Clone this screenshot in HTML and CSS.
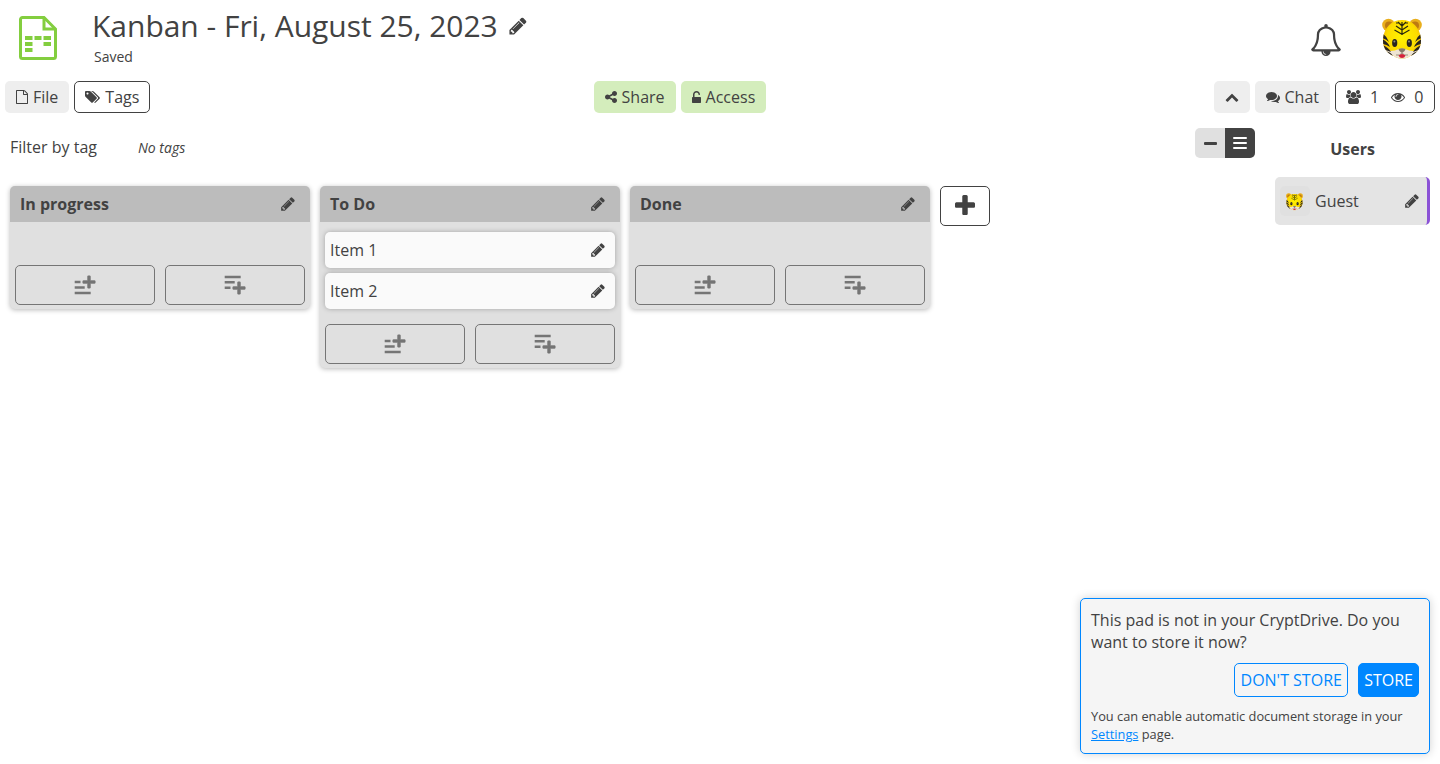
FILE: index.html
```html
<!DOCTYPE html>
<html lang="en">
<head>
<meta charset="utf-8">
<title>Kanban - Fri, August 25, 2023</title>
<link rel="stylesheet" href="styles.css">
</head>
<body>
<svg class="sprite" aria-hidden="true">
  <symbol id="pencil" viewBox="0 0 1792 1792"><path d="M491 1536l91-91-235-235-91 91v107h128v128h107zm523-928q0-22-22-22-10 0-17 7l-542 542q-7 7-7 17 0 22 22 22 10 0 17-7l542-542q7-7 7-17zm-54-192l416 416-832 832h-416v-416zm683 96q0 53-37 90l-166 166-416-416 166-165q36-38 90-38 53 0 91 38l235 234q37 39 37 91z"/></symbol>
  <symbol id="bell" viewBox="0 0 1792 1792"><path d="M912 1696q0-16-16-16-59 0-101.500-42.500t-42.500-101.500q0-16-16-16t-16 16q0 73 51.500 124.500t124.500 51.500q16 0 16-16zm-666-288h1300q-266-300-266-832 0-51-24-105t-69-103-121.500-80.500-169.500-31.500-169.500 31.500-121.500 80.500-69 103-24 105q0 532-266 832zm1482 0q0 52-38 90t-90 38h-448q0 106-75 181t-181 75-181-75-75-181h-448q-52 0-90-38t-38-90q50-42 91-88t85-119.500 74.500-158.500 50-206 19.500-260q0-152 117-282.500t307-158.500q-8-19-8-39 0-40 28-68t68-28 68 28 28 68q0 20-8 39 190 28 307 158.500t117 282.500q0 139 19.500 260t50 206 74.500 158.500 85 119.500 91 88z"/></symbol>
  <symbol id="file" viewBox="128 0 1536 1792"><path d="M1596 380q28 28 48 76t20 88v1152q0 40-28 68t-68 28h-1344q-40 0-68-28t-28-68v-1600q0-40 28-68t68-28h896q40 0 88 20t76 48zm-444-244v376h376q-10-29-22-41l-313-313q-12-12-41-22zm384 1528v-1024h-416q-40 0-68-28t-28-68v-416h-768v1536h1280z"/></symbol>
  <symbol id="tags" viewBox="0 0 1920 1792"><path d="M448 448q0-53-37.500-90.500t-90.500-37.500-90.500 37.500-37.500 90.500 37.500 90.500 90.500 37.500 90.500-37.500 37.500-90.500zm1067 576q0 53-37 90l-491 492q-39 37-91 37-53 0-90-37l-715-716q-38-37-64.500-101t-26.500-117v-416q0-52 38-90t90-38h416q53 0 117 26.500t102 64.500l715 714q37 39 37 91zm384 0q0 53-37 90l-491 492q-39 37-91 37-36 0-59-14t-53-45l470-470q37-37 37-90 0-52-37-91l-715-714q-38-38-102-64.500t-117-26.500h224q53 0 117 26.500t102 64.500l715 714q37 39 37 91z"/></symbol>
  <symbol id="share" viewBox="128 0 1536 1792"><path d="M1344 1024q133 0 226.500 93.500t93.500 226.500-93.500 226.500-226.500 93.500-226.500-93.500-93.500-226.500q0-12 2-34l-360-180q-92 86-218 86-133 0-226.500-93.500t-93.500-226.500 93.500-226.500 226.500-93.500q126 0 218 86l360-180q-2-22-2-34 0-133 93.500-226.500t226.500-93.500 226.500 93.500 93.500 226.500-93.500 226.500-226.500 93.500q-126 0-218-86l-360 180q2 22 2 34t-2 34l360 180q92-86 218-86z"/></symbol>
  <symbol id="unlock" viewBox="320 0 1152 1792"><path d="M1376 896q40 0 68 28t28 68v576q0 40-28 68t-68 28h-960q-40 0-68-28t-28-68v-576q0-40 28-68t68-28h32v-320q0-185 131.500-316.500t316.500-131.500 316.500 131.500 131.500 316.500q0 26-19 45t-45 19h-64q-26 0-45-19t-19-45q0-106-75-181t-181-75-181 75-75 181v320h736z"/></symbol>
  <symbol id="up" viewBox="0 0 1792 1792"><path d="M1683 1331l-166 165q-19 19-45 19t-45-19l-531-531-531 531q-19 19-45 19t-45-19l-166-165q-19-19-19-45.500t19-45.500l742-741q19-19 45-19t45 19l742 741q19 19 19 45.500t-19 45.500z"/></symbol>
  <symbol id="comments" viewBox="0 0 1792 1792"><path d="M1408 768q0 139-94 257t-256.500 186.500-353.500 68.500q-86 0-176-16-124 88-278 128-36 9-86 16h-3q-11 0-20.500-8t-11.500-21q-1-3-1-6.500t.5-6.500 2-6l2.500-5 3.500-5.500 4-5 4.500-5 4-4.500q5-6 23-25t26-29.500 22.500-29 25-38.500 20.500-44q-124-72-195-177t-71-224q0-139 94-257t256.500-186.500 353.500-68.500 353.500 68.500 256.500 186.500 94 257zm384 256q0 120-71 224.500t-195 176.500q10 24 20.500 44t25 38.500 22.500 29 26 29.500 23 25q1 1 4 4.500t4.500 5 4 5 3.500 5.500l2.500 5 2 6 .5 6.500-1 6.500q-3 14-13 22t-22 7q-50-7-86-16-154-40-278-128-90 16-176 16-271 0-472-132 58 4 88 4 161 0 309-45t264-129q125-92 192-212t67-254q0-77-23-152 129 71 204 178t75 230z"/></symbol>
  <symbol id="users" viewBox="64 0 1920 1792"><path d="M657 896q-162 5-265 128h-134q-82 0-138-40.500t-56-118.500q0-353 124-353 6 0 43.500 21t97.500 42.500 119 21.500q67 0 133-23-5 37-5 66 0 139 81 256zm1071 637q0 120-73 189.500t-194 69.500h-874q-121 0-194-69.500t-73-189.500q0-53 3.500-103.500t14-109 26.500-108.500 43-97.500 62-81 85.500-53.500 111.500-20q10 0 43 21.500t73 48 107 48 135 21.500 135-21.500 107-48 73-48 43-21.500q61 0 111.500 20t85.500 53.500 62 81 43 97.500 26.500 108.500 14 109 3.500 103.500zm-1024-1277q0 106-75 181t-181 75-181-75-75-181 75-181 181-75 181 75 75 181zm704 384q0 159-112.500 271.500t-271.500 112.500-271.500-112.500-112.500-271.500 112.500-271.500 271.500-112.500 271.500 112.500 112.500 271.500zm576 225q0 78-56 118.500t-138 40.500h-134q-103-123-265-128 81-117 81-256 0-29-5-66 66 23 133 23 59 0 119-21.500t97.500-42.500 43.500-21q124 0 124 353zm-128-609q0 106-75 181t-181 75-181-75-75-181 75-181 181-75 181 75 75 181z"/></symbol>
  <symbol id="eye" viewBox="0 0 1792 1792"><path d="M1664 960q-152-236-381-353 61 104 61 225 0 185-131.500 316.500t-316.500 131.500-316.500-131.500-131.500-316.500q0-121 61-225-229 117-381 353 133 205 333.500 326.500t434.500 121.500 434.500-121.500 333.500-326.500zm-720-384q0-20-14-34t-34-14q-125 0-214.500 89.500t-89.500 214.500q0 20 14 34t34 14 34-14 14-34q0-86 61-147t147-61q20 0 34-14t14-34zm848 384q0 34-20 69-140 230-376.500 368.500t-499.500 138.500-499.500-139-376.500-368q-20-35-20-69t20-69q140-229 376.500-368t499.500-139 499.500 139 376.500 368q20 35 20 69z"/></symbol>
  <symbol id="plus" viewBox="192 0 1408 1792"><path d="M1600 736v192q0 40-28 68t-68 28h-416v416q0 40-28 68t-68 28h-192q-40 0-68-28t-28-68v-416h-416q-40 0-68-28t-28-68v-192q0-40 28-68t68-28h416v-416q0-40 28-68t68-28h192q40 0 68 28t28 68v416h416q40 0 68 28t28 68z"/></symbol>
  <symbol id="add-top" viewBox="0 0 22 20"><path d="M.7 5.800h5.800v2.500H.7zM.7 11.300h10v2.500H.7zM.7 16.700h16v2.500H.7z"/><path stroke="currentColor" stroke-width=".4" d="M13.500 1.500q0-.8.8-.8h1.400q.8 0 .8.800v4h4q.8 0 .8.800v1.400q0 .8-.8.800h-4v4q0 .8-.8.800h-1.400q-.8 0-.8-.8v-4h-4q-.8 0-.8-.8V6.300q0-.8.8-.8h4z"/></symbol>
  <symbol id="add-bottom" viewBox="0 0 22 20"><path d="M.7.8h16v2.500h-16zM.7 6.100h10v2.500H.7zM.7 11.500h5.800V14H.7z"/><path stroke="currentColor" stroke-width=".4" d="M13.500 7.500q0-.8.8-.8h1.400q.8 0 .8.800v4h4q.8 0 .8.800v1.400q0 .8-.8.800h-4v4q0 .8-.8.800h-1.400q-.8 0-.8-.8v-4h-4q-.8 0-.8-.8v-1.400q0-.8.8-.8h4z"/></symbol>
  <radialGradient id="fur" cx="50%" cy="45%" r="58%"><stop offset="0" stop-color="#fff200"/><stop offset=".65" stop-color="#fddc00"/><stop offset="1" stop-color="#eda60c"/></radialGradient>
  <clipPath id="face"><path d="M20 2C30 2 38 9 39 21c.5 10-5 15-11 17-4 3.500-12 3.500-16 0C6 36 .5 31 1 21 2 9 10 2 20 2z"/></clipPath>
  <symbol id="tiger" viewBox="0 0 40 42">
    <circle cx="6.500" cy="7" r="6.300" fill="#e9ae1c"/><circle cx="33.500" cy="7" r="6.300" fill="#e9ae1c"/>
    <circle cx="7" cy="7.500" r="4" fill="#bd7a12"/><circle cx="33" cy="7.500" r="4" fill="#bd7a12"/>
    <g clip-path="url(#face)">
      <path fill="url(#fur)" d="M0 0h40v42H0z"/>
      <path fill="#eee4d3" d="M0 29q5 1 8 4 5 0 9-2 3-1 6 0 4 2 9 2 3-3 8-4v13H0z"/>
      <path fill="#26231f" d="M0 15q5 3 7 9-3-3-7-4zM0 21q6 3 8 8-4-3-8-3zM0 27q6 2 9 7-5-2-9-2zM3 33q6 1 8 5-4-1-7-1zM40 15q-5 3-7 9 3-3 7-4zM40 21q-6 3-8 8 4-3 8-3zM40 27q-6 2-9 7 5-2 9-2zM37 33q-6 1-8 5 4-1 7-1z"/>
    </g>
    <path d="M20 4v13M20 8l-4-4M20 8l4-4M20 12l-6-4M20 12l6-4M19.500 16l-7-4M20.500 16l7-4M17 5l-3 0M23 5l3 0" fill="none" stroke="#28270e" stroke-width="1.200"/>
    <ellipse cx="12.700" cy="25" rx="2.600" ry="3.900" fill="#28251f"/><ellipse cx="27.300" cy="25" rx="2.600" ry="3.900" fill="#28251f"/>
    <circle cx="12.400" cy="23.600" r="1" fill="#8a8a80"/><circle cx="27" cy="23.600" r="1" fill="#8a8a80"/>
    <path fill="#857969" d="M16.500 31q3.500-1.500 7 0 0 2-3.500 4-3.500-2-3.500-4z"/><path fill="none" stroke="#857969" stroke-width=".8" d="M14 37q4 1 6-2 2 3 6 2"/><path fill="#d5203a" d="M16.500 37.500q3.500-3 7 0-1 2.500-3.500 2.500t-3.500-2.500z"/>
  </symbol>
</svg>

<header class="header">
  <svg class="logo" viewBox="0 0 38 44"><g fill="none" stroke="#83ce3f" stroke-width="3"><path d="M3.500 1.500H25L36.500 13v27.500a2 2 0 0 1-2 2h-31a2 2 0 0 1-2-2v-37a2 2 0 0 1 2-2z"/><path d="M25 1.500V13h11.500"/></g><path fill="#83ce3f" d="M6 20h7.500v4H6zM15.500 20h7v4h-7zM24.500 20H32v4h-7.500zM6 26h7.500v4H6zM24.500 26H32v4h-7.500zM6 32h7.500v4H6z"/></svg>
  <div class="heading">
    <div class="title-line"><h1 class="title">Kanban - Fri, August 25, 2023</h1><svg class="title-pencil"><use href="#pencil"/></svg></div>
    <div class="saved">Saved</div>
  </div>
  <svg class="bell"><use href="#bell"/></svg>
  <svg class="avatar"><use href="#tiger"/></svg>
</header>

<nav class="toolbar">
  <div class="group">
    <button class="btn"><svg class="i12"><use href="#file"/></svg>File</button>
    <button class="btn outlined"><svg class="i15"><use href="#tags"/></svg>Tags</button>
  </div>
  <div class="group center">
    <button class="btn green"><svg class="i12"><use href="#share"/></svg>Share</button>
    <button class="btn green"><svg class="i9"><use href="#unlock"/></svg>Access</button>
  </div>
  <div class="group">
    <button class="btn up"><svg class="i14"><use href="#up"/></svg></button>
    <button class="btn"><svg class="i14"><use href="#comments"/></svg>Chat</button>
    <button class="btn outlined people"><svg class="i15"><use href="#users"/></svg><span class="count">1</span><svg class="i14"><use href="#eye"/></svg><span>0</span></button>
  </div>
</nav>

<div class="content">
  <main class="kanban">
    <div class="filter">
      <span class="filter-label">Filter by tag</span><em class="no-tags">No tags</em>
      <div class="view"><span class="view-item"><i class="bar"></i></span><span class="view-item active"><i class="bar"></i><i class="bar"></i><i class="bar"></i></span></div>
    </div>
    <div class="boards">
      <section class="board">
        <h2 class="board-head">In progress<svg class="i16"><use href="#pencil"/></svg></h2>
        <div class="items"></div>
        <div class="adds"><button class="add"><svg><use href="#add-top"/></svg></button><button class="add"><svg><use href="#add-bottom"/></svg></button></div>
      </section>
      <section class="board">
        <h2 class="board-head">To Do<svg class="i16"><use href="#pencil"/></svg></h2>
        <div class="items">
          <div class="item">Item 1<svg class="i16"><use href="#pencil"/></svg></div>
          <div class="item">Item 2<svg class="i16"><use href="#pencil"/></svg></div>
        </div>
        <div class="adds"><button class="add"><svg><use href="#add-top"/></svg></button><button class="add"><svg><use href="#add-bottom"/></svg></button></div>
      </section>
      <section class="board">
        <h2 class="board-head">Done<svg class="i16"><use href="#pencil"/></svg></h2>
        <div class="items"></div>
        <div class="adds"><button class="add"><svg><use href="#add-top"/></svg></button><button class="add"><svg><use href="#add-bottom"/></svg></button></div>
      </section>
      <button class="new-board"><svg><use href="#plus"/></svg></button>
    </div>
  </main>
  <aside class="users">
    <h2 class="users-title">Users</h2>
    <div class="user"><span class="user-avatar"><svg><use href="#tiger"/></svg></span><span class="user-name">Guest</span><svg class="i16"><use href="#pencil"/></svg></div>
  </aside>
</div>

<div class="popup">
  <p class="question">This pad is not in your CryptDrive. Do you want to store it now?</p>
  <div class="actions"><button class="action dismiss">DON'T STORE</button><button class="action primary">STORE</button></div>
  <p class="hint">You can enable automatic document storage in your <a class="link" href="#">Settings</a> page.</p>
</div>
</body>
</html>
```
FILE: styles.css
```css
* { box-sizing: border-box; }
body { margin: 0; height: 764px; overflow: hidden; background: #fff; color: #424242; font: 16px/22px "Open Sans", sans-serif; }
svg { fill: currentColor; flex: none; display: block; }
button { font: inherit; color: inherit; margin: 0; }
.sprite { position: absolute; width: 0; height: 0; }

.header { display: flex; height: 81px; padding: 0 18px 0 19px; }
.logo { width: 38px; height: 44px; margin-top: 16px; }
.heading { flex: 1; padding: 5px 0 0 35px; }
.title-line { display: flex; height: 42px; align-items: center; gap: 10px; }
.title { margin: 0; font-size: 30px; font-weight: 400; line-height: 42px; letter-spacing: -.02px; }
.title-pencil { width: 20px; height: 20px; }
.saved { margin: 1px 0 0 2px; font-size: 14px; line-height: 18px; }
.bell { width: 32px; height: 32px; margin: 24px 40px 0 0; }
.avatar { width: 40px; height: 42px; margin-top: 18px; }

.toolbar { display: flex; justify-content: space-between; height: 32px; padding: 0 5px; }
.group { display: flex; gap: 5px; }
.center { padding-right: 4px; }
.btn { display: flex; align-items: center; height: 32px; gap: 5px; padding: 0 10px; border: 1px solid transparent; border-radius: 5px; background: #eee; line-height: 22px; }
.outlined { background: #fff; border-color: #424242; }
.green { background: #d4edbc; }
.up { width: 36px; }
.people { width: 100px; gap: 9px; }
.count { margin-right: 3px; }
.i9 { width: 9px; height: 14px; }
.i12 { width: 12px; height: 14px; }
.i14 { width: 14px; height: 14px; }
.i15 { width: 15px; height: 14px; }
.i16 { width: 16px; height: 16px; }

.content { display: flex; padding-top: 15px; }
.kanban { width: 1265px; padding: 0 10px; }
.filter { display: flex; height: 30px; }
.filter-label { width: 128px; padding-top: 8px; }
.no-tags { flex: 1; padding-top: 9px; font-size: 14px; }
.view { display: flex; width: 60px; height: 30px; overflow: hidden; border-radius: 5px; background: #e0e0e0; }
.view-item { display: flex; flex: 1; flex-direction: column; align-items: center; justify-content: center; gap: 2.5px; }
.view-item .bar { width: 13px; height: 3px; border-radius: 1px; background: #424242; }
.active { background: #424242; }
.active .bar { width: 14px; height: 2.2px; background: #fff; }
.boards { display: flex; align-items: flex-start; gap: 10px; padding-top: 28px; }
.board { width: 300px; border-radius: 5px; background: #e0e0e0; box-shadow: 0 1px 5px rgba(0,0,0,.28); }
.board-head { display: flex; align-items: center; justify-content: space-between; height: 36px; margin: 0; padding: 0 14px 0 10px; border-radius: 5px 5px 0 0; background: #bcbcbc; font-size: 16px; line-height: 22px; }
.items { display: flex; flex-direction: column; gap: 5px; min-height: 43px; padding: 10px 5px 15px; }
.item { display: flex; align-items: center; justify-content: space-between; height: 36px; padding: 0 9px 0 5px; border-radius: 5px; background: #fafafa; box-shadow: 0 0 5px rgba(0,0,0,.27); }
.adds { display: flex; gap: 10px; padding: 0 5px 4px; }
.add { display: flex; align-items: center; justify-content: center; flex: 1; height: 40px; padding: 0; border: 1px solid #757575; border-radius: 5px; background: none; color: #757575; }
.add svg { width: 22px; height: 20px; }
.new-board { display: flex; align-items: center; justify-content: center; width: 50px; height: 40px; padding: 0; border: 1px solid #424242; border-radius: 5px; background: #fff; }
.new-board svg { width: 20px; height: 26px; }

.users { width: 175px; padding: 10px 10px 0; }
.users-title { margin: 0 0 17px; font-size: 16px; line-height: 22px; text-align: center; }
.user { display: flex; align-items: center; height: 48px; padding: 0 7px 0 5px; border-right: 3px solid #8b52d6; border-radius: 5px; background: #e4e4e4; }
.user-avatar { display: flex; align-items: center; justify-content: center; width: 30px; height: 30px; border-radius: 5px; background: #e0e0e0; }
.user-avatar svg { width: 17px; height: 18px; margin: 2px 1px 0 0; }
.user-name { flex: 1; padding-left: 5px; }

.popup { position: absolute; right: 10px; bottom: 10px; width: 350px; height: 156px; padding: 10px; border: 1px solid #0087ff; border-radius: 5px; background: #f5f5f5; box-shadow: 0 0 10px rgba(0,0,0,.18); }
.question { margin: 0 0 10px; }
.actions { display: flex; justify-content: flex-end; gap: 10px; }
.action { height: 34px; padding: 0 5px; border: 1px solid #0087ff; border-radius: 5px; background: transparent; color: #0087ff; }
.dismiss { width: 114px; }
.primary { background: #0087ff; color: #fff; }
.hint { margin: 10px 0 0; font-size: 12.8px; line-height: 18px; }
.link { color: #0087ff; }
```
